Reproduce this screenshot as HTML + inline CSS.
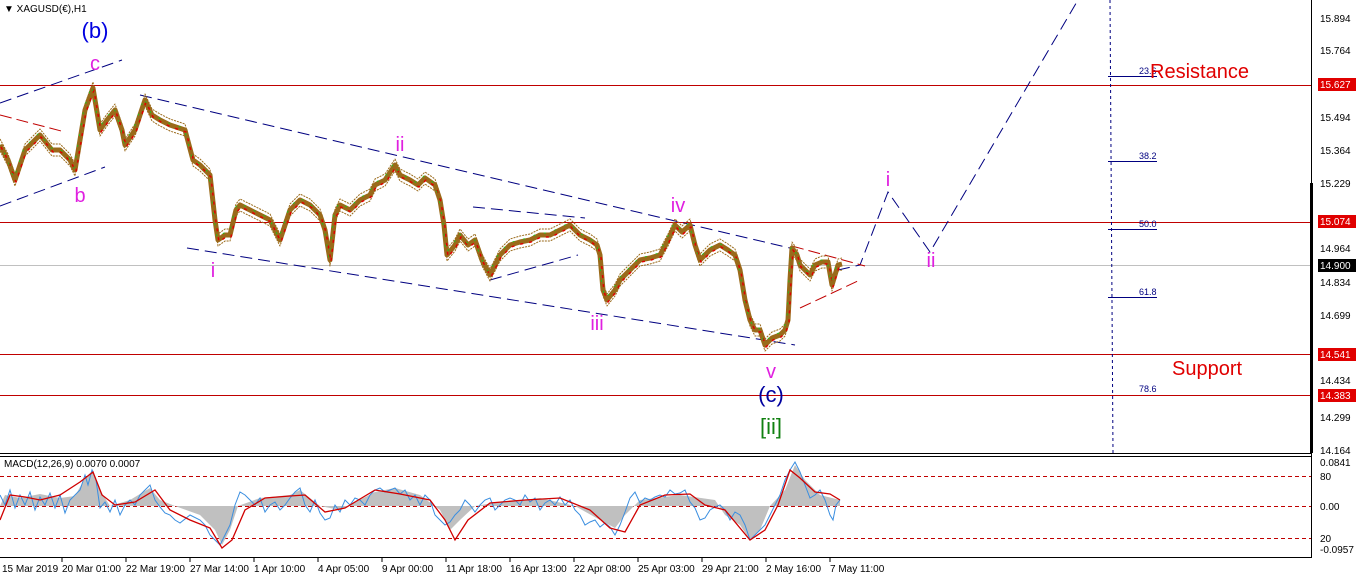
<!DOCTYPE html>
<html><head><meta charset="utf-8"><style>
body{margin:0;background:#fff;width:1360px;height:580px;overflow:hidden;font-family:"Liberation Sans",sans-serif}
svg text{font-family:"Liberation Sans",sans-serif}
</style></head><body>
<svg width="1360" height="580" viewBox="0 0 1360 580" xmlns="http://www.w3.org/2000/svg">
<defs>
<polyline id="pr" points="0,145 8,160 15,180 25,150 40,135 52,150 60,150 70,160 75,170 80,140 85,110 93,88 100,130 107,120 115,110 122,130 125,145 135,130 145,100 152,115 160,120 170,125 185,130 193,160 200,165 210,175 215,220 218,240 225,235 230,235 236,210 240,205 250,210 260,215 270,220 280,240 290,210 300,200 310,205 320,215 325,230 330,260 335,215 340,205 350,210 360,200 370,195 375,185 385,180 395,165 400,175 410,180 418,185 425,178 435,185 440,200 444,225 447,255 455,245 460,235 468,245 475,240 482,260 490,275 500,255 510,245 520,242 530,240 540,235 550,235 560,230 570,225 580,235 590,240 597,245 600,255 603,290 607,300 615,290 620,280 630,270 640,260 650,258 660,255 668,240 675,225 682,232 690,225 695,245 700,260 710,250 720,245 728,250 735,255 740,270 745,300 750,320 755,330 760,330 765,345 772,338 780,335 785,330 788,320 790,280 792,248 797,255 800,265 805,270 810,275 815,265 822,262 828,262 832,285 835,275 838,265 842,264"/>
</defs>
<rect width="1360" height="580" fill="#fff"/>
<line x1="1311.5" y1="0" x2="1311.5" y2="558" stroke="#000"/>
<line x1="0" y1="453.5" x2="1311" y2="453.5" stroke="#000"/>
<line x1="0" y1="456.5" x2="1311" y2="456.5" stroke="#000"/>
<line x1="0" y1="557.5" x2="1311" y2="557.5" stroke="#000"/>
<text x="4" y="12" font-size="10" fill="#000">▼ XAGUSD(€),H1</text>
<g stroke="#c00000" stroke-width="1">
<line x1="0" y1="85.5" x2="1311" y2="85.5"/>
<line x1="0" y1="222.5" x2="1311" y2="222.5"/>
<line x1="0" y1="354.5" x2="1311" y2="354.5"/>
<line x1="0" y1="395.5" x2="1311" y2="395.5"/>
</g>
<line x1="0" y1="265.5" x2="1311" y2="265.5" stroke="#c0c0c0"/>
<line x1="1110" y1="0" x2="1113" y2="453" stroke="#000080" stroke-dasharray="3,3"/>
<g stroke="#000080"><line x1="1108" y1="76.5" x2="1157" y2="76.5"/><line x1="1108" y1="161.5" x2="1157" y2="161.5"/><line x1="1108" y1="229.5" x2="1157" y2="229.5"/><line x1="1108" y1="297.5" x2="1157" y2="297.5"/></g>
<g font-size="9" fill="#000080"><text x="1139" y="74">23.6</text><text x="1139" y="159">38.2</text><text x="1139" y="227">50.0</text><text x="1139" y="295">61.8</text><text x="1139" y="392">78.6</text></g>
<text x="1150" y="78" font-size="20" fill="#e00000">Resistance</text>
<text x="1172" y="375" font-size="20" fill="#e00000">Support</text>
<g stroke="#000080" stroke-dasharray="12,6" fill="none">
<line x1="0" y1="103" x2="122" y2="60"/>
<line x1="0" y1="206" x2="105" y2="167"/>
<line x1="140" y1="95" x2="790" y2="248"/>
<line x1="187" y1="248" x2="795" y2="345"/>
<line x1="473" y1="207" x2="585" y2="218"/>
<line x1="490" y1="280" x2="578" y2="255"/>
<polyline points="838,270 860,265 888,192 930,252 1078,0"/>
</g>
<g stroke="#c00000" stroke-dasharray="12,5" fill="none">
<line x1="0" y1="115" x2="65" y2="132"/>
<line x1="792" y1="246" x2="865" y2="266"/>
<line x1="800" y1="308" x2="860" y2="280"/>
</g>
<g fill="none" stroke-linejoin="round">
<use href="#pr" transform="translate(0,-6)" stroke="#9a6a1a" stroke-width="1" stroke-dasharray="2,1"/>
<use href="#pr" transform="translate(0,6)" stroke="#9a6a1a" stroke-width="1" stroke-dasharray="2,1"/>
<use href="#pr" stroke="#9a6a1a" stroke-width="5"/>
<use href="#pr" transform="translate(1,2)" stroke="#e00000" stroke-width="1.5" stroke-dasharray="3,6"/>
<use href="#pr" transform="translate(-1,-2)" stroke="#20c020" stroke-width="1" stroke-dasharray="2,9"/>
</g>
<g font-size="20" fill="#e020e0" text-anchor="middle">
<text x="95" y="70">c</text><text x="80" y="202">b</text>
<text x="213" y="277">i</text><text x="400" y="151">ii</text>
<text x="597" y="330">iii</text><text x="678" y="212">iv</text>
<text x="771" y="378">v</text><text x="888" y="186">i</text><text x="931" y="267">ii</text>
</g>
<text x="95" y="38" font-size="22" fill="#0000e0" text-anchor="middle">(b)</text>
<text x="771" y="402" font-size="22" fill="#0000a0" text-anchor="middle">(c)</text>
<text x="771" y="434" font-size="22" fill="#108010" text-anchor="middle">[ii]</text>
<g font-size="10" fill="#000">
<text x="1320" y="22">15.894</text><text x="1320" y="54">15.764</text><text x="1320" y="121">15.494</text><text x="1320" y="154">15.364</text><text x="1320" y="187">15.229</text><text x="1320" y="252">14.964</text><text x="1320" y="286">14.834</text><text x="1320" y="319">14.699</text><text x="1320" y="384">14.434</text><text x="1320" y="421">14.299</text><text x="1320" y="454">14.164</text>
<text x="1320" y="466">0.0841</text><text x="1320" y="480">80</text><text x="1320" y="510">0.00</text><text x="1320" y="542">20</text><text x="1320" y="553">-0.0957</text>
</g>
<rect x="1318" y="78" width="38" height="13" fill="#e00000"/><text x="1320" y="88" font-size="10" fill="#fff">15.627</text>
<rect x="1318" y="215" width="38" height="13" fill="#e00000"/><text x="1320" y="225" font-size="10" fill="#fff">15.074</text>
<rect x="1318" y="259" width="38" height="13" fill="#000"/><text x="1320" y="269" font-size="10" fill="#fff">14.900</text>
<rect x="1318" y="348" width="38" height="13" fill="#e00000"/><text x="1320" y="358" font-size="10" fill="#fff">14.541</text>
<rect x="1318" y="389" width="38" height="13" fill="#e00000"/><text x="1320" y="399" font-size="10" fill="#fff">14.383</text>
<rect x="1310" y="183" width="3" height="270" fill="#000"/>
<text x="4" y="467" font-size="10" fill="#000">MACD(12,26,9) 0.0070 0.0007</text>
<g stroke="#c00000" stroke-dasharray="4,3"><line x1="0" y1="476.5" x2="1311" y2="476.5"/><line x1="0" y1="506.5" x2="1311" y2="506.5"/><line x1="0" y1="538.5" x2="1311" y2="538.5"/></g>
<path fill="#c0c0c0" d="M0,506 L5,495 20,498 40,494 60,498 75,496 85,478 93,470 100,490 110,506 130,500 150,488 160,500 175,506 200,515 215,530 222,545 230,530 238,506 260,498 290,495 300,490 320,506 340,510 375,492 395,488 420,495 440,510 450,530 460,520 475,506 500,502 540,498 575,506 600,520 615,528 625,515 640,500 680,495 715,500 725,515 740,525 750,540 760,530 770,506 785,490 795,465 805,480 820,495 840,500 840,506 Z"/>
<polyline fill="none" stroke="#3a8ee0" stroke-width="1" points="0,495 5,505 10,490 15,508 20,495 25,505 30,492 35,510 40,497 45,505 50,493 55,508 60,495 65,513 70,500 75,495 80,490 85,475 88,485 92,470 96,480 100,508 105,502 110,512 115,500 120,515 125,505 130,500 135,505 140,495 145,490 150,485 155,500 160,507 165,513 170,515 175,520 180,523 190,515 200,520 205,525 210,535 215,540 220,545 225,535 230,525 235,505 240,492 245,495 250,500 255,505 260,498 265,512 270,505 275,502 280,510 285,505 290,498 295,492 300,488 305,505 310,512 315,500 320,513 325,520 330,518 335,505 340,512 345,500 350,505 355,498 360,500 365,505 370,495 375,490 380,488 385,492 390,490 395,488 400,494 405,490 410,500 415,495 420,505 425,495 430,500 435,515 440,520 445,525 450,522 455,515 460,510 465,500 470,505 475,512 480,505 485,500 490,498 495,510 500,505 505,500 510,498 515,500 520,505 525,495 530,502 535,498 540,510 545,503 550,500 555,505 560,497 565,505 570,500 575,510 580,515 585,525 590,522 595,520 600,527 605,523 610,527 615,535 620,525 625,512 630,498 635,492 640,503 645,498 650,500 655,497 660,495 665,497 670,490 675,494 680,493 685,490 690,502 695,508 700,520 705,518 710,510 715,507 720,505 725,510 730,520 735,512 740,515 745,525 750,540 755,535 760,530 765,525 770,515 775,505 780,495 785,480 790,470 795,462 800,472 805,485 810,498 815,495 820,490 825,500 830,515 833,520 836,505 840,500"/>
<polyline fill="none" stroke="#d00000" stroke-width="1.3" points="0,520 10,495 25,497 40,500 60,495 80,482 93,472 102,495 115,505 135,502 155,490 170,510 190,520 210,528 222,548 232,540 245,510 265,498 290,496 305,495 325,512 345,508 375,490 400,494 430,500 445,520 455,540 468,520 490,503 525,500 560,498 590,510 610,528 625,532 640,505 665,495 690,494 705,505 725,510 750,540 765,530 778,505 790,470 800,478 815,492 830,494 840,500"/>
<g stroke="#000"><line x1="62" y1="558" x2="62" y2="562"/><line x1="126" y1="558" x2="126" y2="562"/><line x1="190" y1="558" x2="190" y2="562"/><line x1="254" y1="558" x2="254" y2="562"/><line x1="318" y1="558" x2="318" y2="562"/><line x1="382" y1="558" x2="382" y2="562"/><line x1="446" y1="558" x2="446" y2="562"/><line x1="510" y1="558" x2="510" y2="562"/><line x1="574" y1="558" x2="574" y2="562"/><line x1="638" y1="558" x2="638" y2="562"/><line x1="702" y1="558" x2="702" y2="562"/><line x1="766" y1="558" x2="766" y2="562"/><line x1="830" y1="558" x2="830" y2="562"/></g>
<g font-size="10" fill="#000">
<text x="2" y="572">15 Mar 2019</text><text x="62" y="572">20 Mar 01:00</text><text x="126" y="572">22 Mar 19:00</text><text x="190" y="572">27 Mar 14:00</text><text x="254" y="572">1 Apr 10:00</text><text x="318" y="572">4 Apr 05:00</text><text x="382" y="572">9 Apr 00:00</text><text x="446" y="572">11 Apr 18:00</text><text x="510" y="572">16 Apr 13:00</text><text x="574" y="572">22 Apr 08:00</text><text x="638" y="572">25 Apr 03:00</text><text x="702" y="572">29 Apr 21:00</text><text x="766" y="572">2 May 16:00</text><text x="830" y="572">7 May 11:00</text>
</g>
</svg>
</body></html>
